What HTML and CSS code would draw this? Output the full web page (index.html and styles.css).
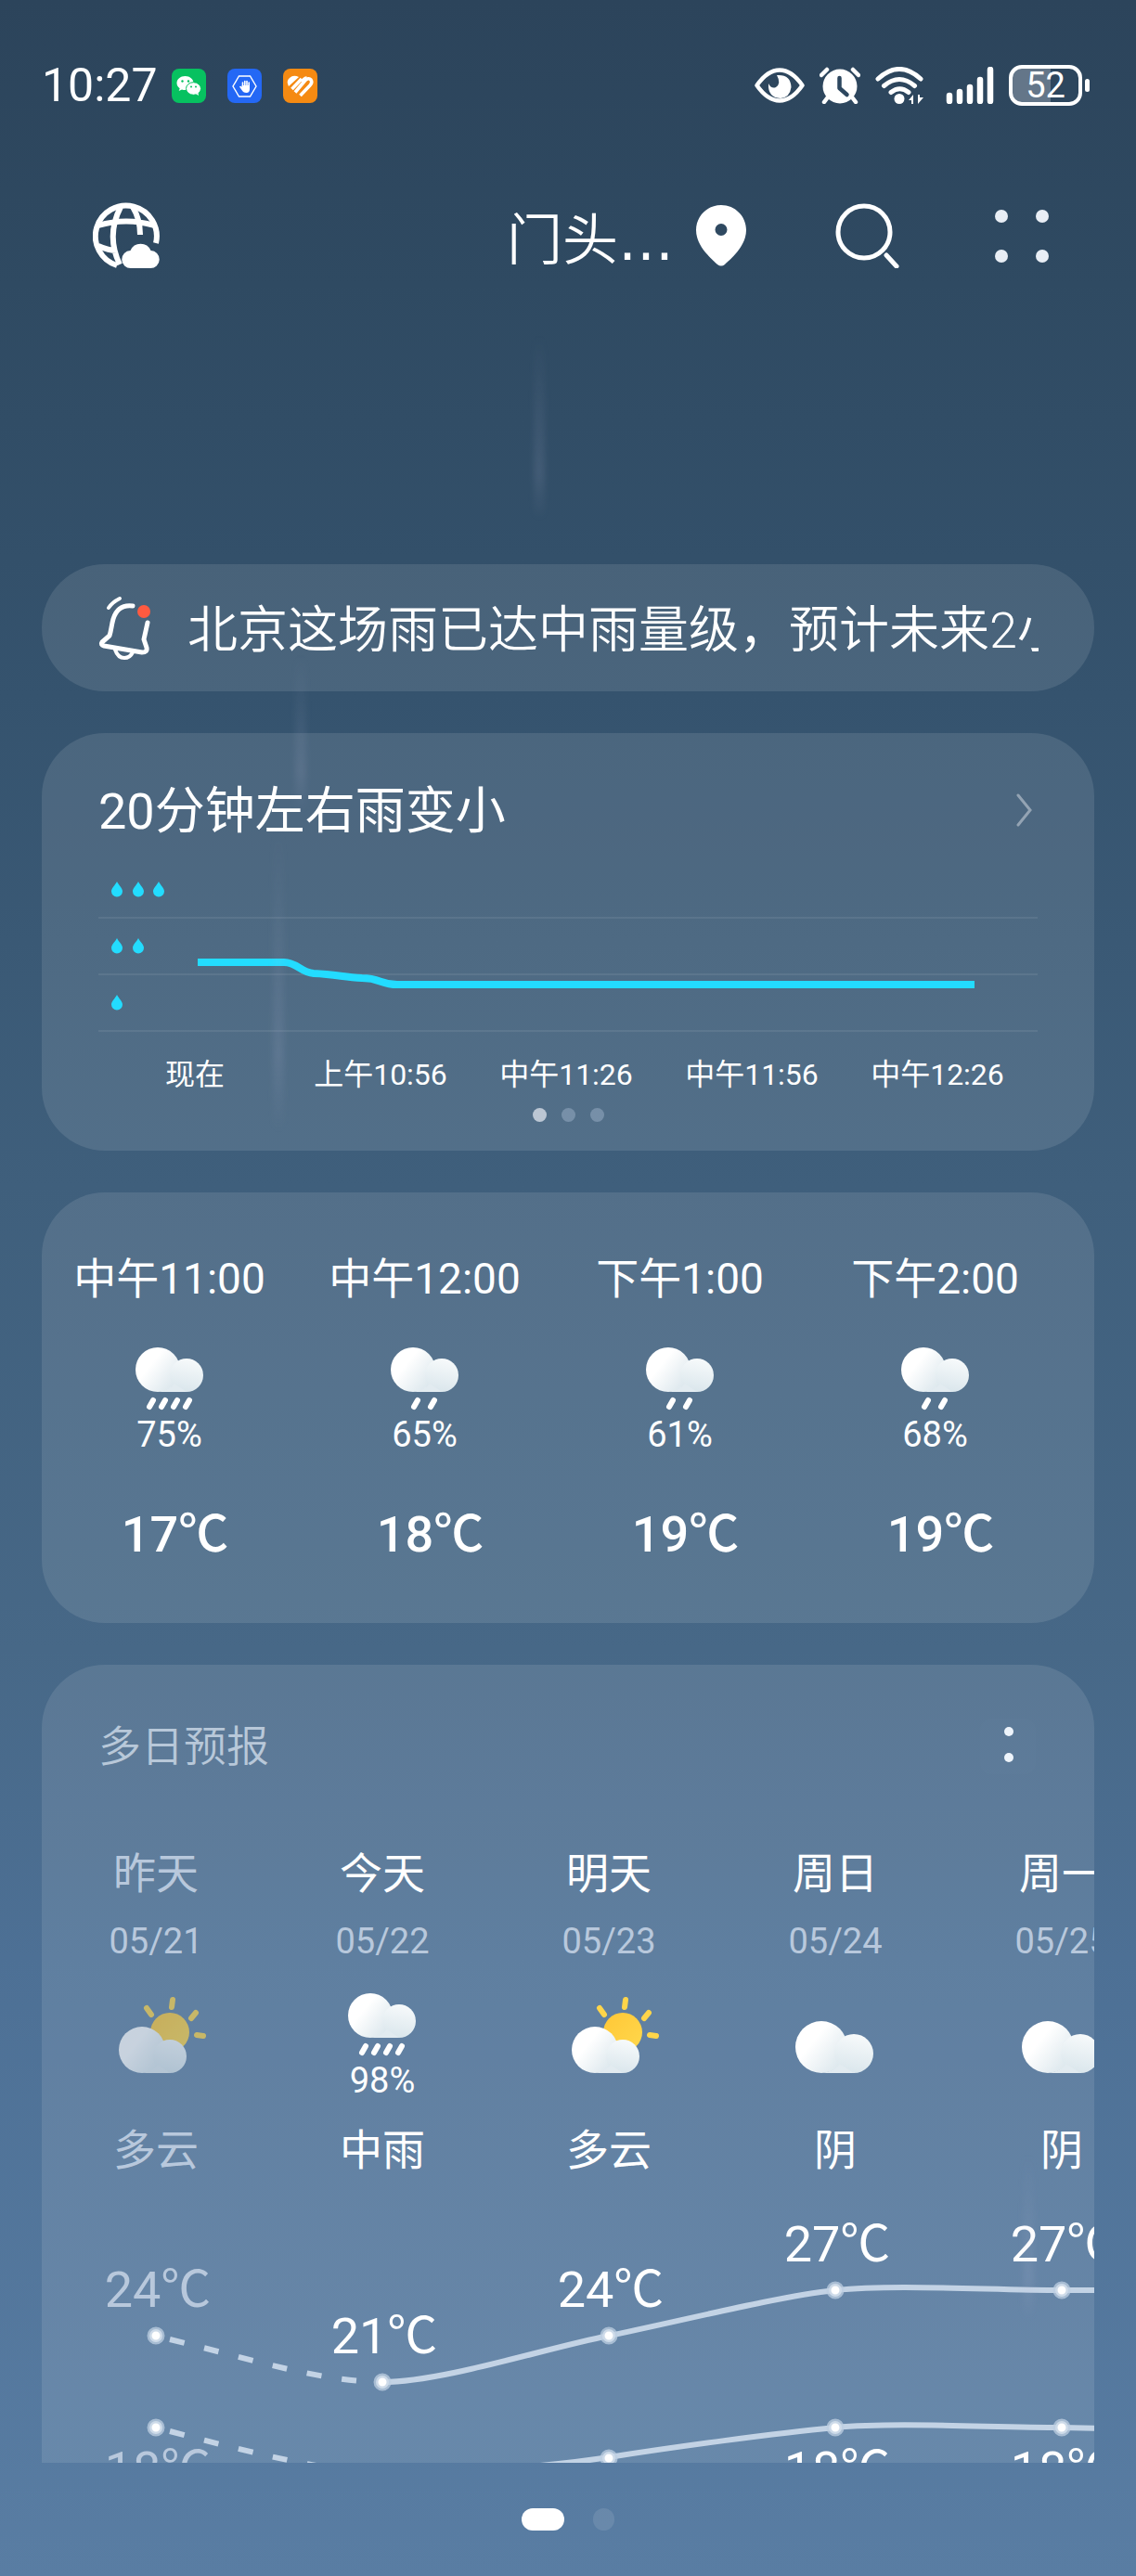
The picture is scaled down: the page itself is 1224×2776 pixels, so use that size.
FILE: index.html
```html
<!DOCTYPE html>
<html lang="zh-CN">
<head>
  <meta charset="UTF-8">
  <meta name="viewport" content="width=device-width, initial-scale=1">
  <title>天气</title>
  <link rel="stylesheet" href="styles.css">
</head>
<body>
  <!-- shared weather icons -->
  <svg class="defs" width="0" height="0" aria-hidden="true">
    <defs>
      <linearGradient id="cloudFill" x1="0" y1="0.2" x2="1" y2="1">
        <stop offset="0.3" stop-color="#ffffff"/>
        <stop offset="1" stop-color="#d3e1e8"/>
      </linearGradient>
      <linearGradient id="puffFill" x1="0.6" y1="0" x2="0.4" y2="1">
        <stop offset="0" stop-color="#f7fafb"/>
        <stop offset="1" stop-color="#dae6ec"/>
      </linearGradient>
      <linearGradient id="sunFill" x1="0" y1="0" x2="1" y2="1">
        <stop offset="0" stop-color="#ffc736"/>
        <stop offset="1" stop-color="#ffd84d"/>
      </linearGradient>
    </defs>
    <symbol id="rainCloud" viewBox="0 0 100 72">
      <circle cx="37" cy="26" r="24" fill="url(#cloudFill)"/>
      <circle cx="68" cy="32" r="18" fill="url(#puffFill)"/>
      <path d="M37 50q12-2 18-9l13 9z" fill="#e2ebf0"/>
    </symbol>
    <symbol id="heavyRain" viewBox="0 0 100 72">
      <use href="#rainCloud" width="100" height="72"/>
      <path d="M32 59l-4 7M45 59l-4 7M58 59l-4 7M71 59l-4 7" stroke="#fff" stroke-width="6" stroke-linecap="round"/>
    </symbol>
    <symbol id="lightRain" viewBox="0 0 100 72">
      <use href="#rainCloud" width="100" height="72"/>
      <path d="M42 59l-4 7M60 59l-4 7" stroke="#fff" stroke-width="6" stroke-linecap="round"/>
    </symbol>
    <symbol id="partlyCloudy" viewBox="0 0 110 96">
      <circle cx="70" cy="44" r="21" fill="url(#sunFill)"/>
      <path d="M73 9l-1 8M45 18l5 7M98 23l-5 6M99 47l7 1" stroke="#ffd54a" stroke-width="6" stroke-linecap="round"/>
      <circle cx="40" cy="63" r="25" fill="url(#cloudFill)"/>
      <circle cx="70" cy="70" r="18" fill="url(#puffFill)"/>
      <path d="M40 88q12-2 17-9l13 9z" fill="#e2ebf0"/>
    </symbol>
    <symbol id="cloudy" viewBox="0 0 110 96">
      <circle cx="40" cy="60" r="28" fill="url(#cloudFill)"/>
      <circle cx="75" cy="67" r="21" fill="url(#puffFill)"/>
      <path d="M40 88q14-2 20-10l15 10z" fill="#e2ebf0"/>
    </symbol>
  </svg>

  <div class="streak streak-a"></div>
  <div class="streak streak-b"></div>
  <div class="streak streak-c"></div>
  <div class="streak streak-d"></div>

  <div class="status-bar">
    <span class="clock">10:27</span>
    <div class="app-icons">
      <svg width="37" height="37" viewBox="0 0 37 37">
        <rect width="37" height="37" rx="8" fill="#07c160"/>
        <path d="M14.500 8c-5 0-9 3.300-9 7.500 0 2.300 1.200 4.300 3.200 5.700l-1 2.800 3.300-1.600c1.100.4 2.300.6 3.500.6 5 0 9-3.300 9-7.500S19.500 8 14.500 8z" fill="#fff"/>
        <ellipse cx="23.500" cy="21.500" rx="8" ry="6.800" fill="#fff" stroke="#07c160" stroke-width="1"/>
        <path d="M26 27l3 2-.5-3z" fill="#fff"/>
        <g fill="#07c160"><circle cx="11.500" cy="13.500" r="1.200"/><circle cx="18" cy="13.500" r="1.200"/><circle cx="21" cy="19.500" r="1"/><circle cx="26" cy="19.500" r="1"/></g>
      </svg>
      <svg width="37" height="37" viewBox="0 0 37 37">
        <rect width="37" height="37" rx="8" fill="#2468f5"/>
        <path d="M12.500 8h12l6.500 11-6.500 11h-12L6 19z" fill="none" stroke="#fff" stroke-width="1.400"/>
        <path d="M16.500 15v5M18.800 13.500v6M21 13.500v6M23.200 15v5" stroke="#fff" stroke-width="1.600" stroke-linecap="round"/>
        <path d="M15.700 18H24v4q0 4-3.500 4t-5-3l-2.500-3.500q1-1.500 2.700.5z" fill="#fff"/>
      </svg>
      <svg width="37" height="37" viewBox="0 0 37 37">
        <rect width="37" height="37" rx="8" fill="#f58a12"/>
        <path d="M6 19q-3-6 1-9 4-4 10-1z" fill="#fff"/>
        <path d="M9.500 22L20 11M13 25.500L23.500 13q4-4 6.500-1 2 3-1 6L18.500 29M20 14q3-4 5.500-4" fill="none" stroke="#fff" stroke-width="3.600"/>
      </svg>
    </div>
    <div class="system-icons">
      <svg width="54" height="38" viewBox="0 0 54 38">
        <path d="M2.500 19Q14 2.500 27 2.500T51.500 19Q40 35.500 27 35.500T2.500 19z" fill="none" stroke="#fff" stroke-width="4.500" stroke-linejoin="round"/>
        <path d="M24 8q15-1 15.500 13Q38 32 28 33 14 32 15 17q3 6 8 4 6-4 1-13z" fill="#fff"/>
      </svg>
      <svg width="44" height="40" viewBox="0 0 44 40" fill="none" stroke="#fff" stroke-linecap="round">
        <circle cx="22" cy="21" r="18.500" fill="#fff" stroke="none"/>
        <path d="M2 9l6-6M42 9l-6-6M8 34l-3 4M36 34l3 4" stroke-width="4.500"/>
        <path d="M21.500 12v11l8 7" stroke="#2d475f" stroke-width="4.500" stroke-linejoin="round"/>
      </svg>
      <svg width="52" height="40" viewBox="0 0 52 40">
        <path d="M3 13q23-21 46 0M9.500 20.500q16.500-14 33 0M17 27.500q9.500-7.500 19 0" fill="none" stroke="#fff" stroke-width="5" stroke-linecap="round"/>
        <circle cx="26" cy="34.500" r="5.500" fill="#fff"/>
        <path d="M36 36l5-6v10h-2v-4zM50 33h2l-6 7V30h2v3z" fill="#fff"/>
      </svg>
      <svg width="60" height="40" viewBox="0 0 60 40">
        <path d="M12 31v6M23 27v10M34 22v15M45 14v23M56 3v34" stroke="#fff" stroke-width="6.500" stroke-linecap="round"/>
      </svg>
      <div class="battery"><span>52</span></div>
    </div>
  </div>

  <header class="top-bar">
    <button class="icon-btn" type="button" aria-label="全球天气">
      <svg width="72" height="72" viewBox="0 0 72 72" fill="none" stroke="#fff" stroke-width="6">
        <path d="M26 68A33 33 0 1 1 68 44"/>
        <path d="M29 67Q14 36 30 5M43 5q8 13 8 30M6 25q30-9 60 0M6 47q11 5 20 5"/>
        <path d="M41 71a9.500 9.500 0 0 1-.5-19 12 12 0 0 1 22 0 9.500 9.500 0 0 1-.5 19z" fill="#fff" stroke="none"/>
      </svg>
    </button>
    <button class="location" type="button">
      <span class="city">门头<span class="more">…</span></span>
      <svg width="54" height="66" viewBox="0 0 54 66">
        <path d="M27 0C12 0 0 12 0 27c0 18 18 32 23 37q4 3 8 0c5-5 23-19 23-37C54 12 42 0 27 0zm0 20a6.500 6.500 0 1 1 0 13 6.500 6.500 0 0 1 0-13z" fill="#fff"/>
      </svg>
    </button>
    <button class="icon-btn" type="button" aria-label="搜索">
      <svg width="70" height="70" viewBox="0 0 70 70" fill="none" stroke="#fff">
        <circle cx="31" cy="31" r="28" stroke-width="5"/>
        <path d="M55 56l11 12" stroke-width="5" stroke-linecap="round"/>
      </svg>
    </button>
    <button class="icon-btn" type="button" aria-label="更多">
      <svg width="64" height="58" viewBox="0 0 64 58" fill="#e9eef5">
        <circle cx="13" cy="8" r="7"/><circle cx="57" cy="8" r="7"/>
        <circle cx="13" cy="51" r="7"/><circle cx="57" cy="51" r="7"/>
      </svg>
    </button>
  </header>

  <main>
    <section class="card alert">
      <svg width="60" height="70" viewBox="0 0 60 70" fill="none" stroke="#fff" stroke-width="5" stroke-linecap="round" stroke-linejoin="round">
        <path d="M38 11Q22 9 17 25c-2 7-2 12-4 18l-8 7q-2 3 2 4l41 7q6 0 5-5l-3-9 4-18"/>
        <path d="M19 58q3 9 10 9 6 0 9-6M12 13q4-6 12-10" stroke-width="4"/>
        <circle cx="50" cy="17" r="7" fill="#ff5a40" stroke="none"/>
      </svg>
      <p>北京这场雨已达中雨量级，预计未来2小时</p>
    </section>

    <section class="card rain">
      <div class="rain-title">
        <h2>20分钟左右雨变小</h2>
        <svg width="20" height="36" viewBox="0 0 20 36">
          <path d="M3 2l13 16L3 34" fill="none" stroke="#fff" stroke-opacity="0.400" stroke-width="3" stroke-linecap="round"/>
        </svg>
      </div>
      <svg class="rain-chart" viewBox="0 0 1012 184">
        <defs><path id="drop" d="M0-8C2-4 6-1 6 2.500a6 6 0 0 1-12 0C-6-1-2-4 0-8z"/></defs>
        <path d="M0 61h1012M0 122h1012M0 183h1012" stroke="#fff" stroke-opacity="0.080" stroke-width="2"/>
        <g fill="#23dcff">
          <use href="#drop" x="20" y="30"/><use href="#drop" x="43" y="30"/><use href="#drop" x="65" y="30"/>
          <use href="#drop" x="20" y="91"/><use href="#drop" x="43" y="91"/>
          <use href="#drop" x="20" y="152"/>
        </g>
        <path d="M107 109h93c14 0 18 11 32 12 24 1 32 4 52 5 20 0 20 7 38 7h622" fill="none" stroke="#23dcff" stroke-width="8"/>
      </svg>
      <div class="rain-times">
        <span>现在</span>
        <span>上午10:56</span>
        <span>中午11:26</span>
        <span>中午11:56</span>
        <span>中午12:26</span>
      </div>
      <div class="dots"><i class="on"></i><i></i><i></i></div>
    </section>

    <section class="card hourly">
      <div class="hour">
        <span class="time">中午11:00</span>
        <svg width="100" height="72"><use href="#heavyRain"/></svg>
        <span class="chance">75%</span>
        <span class="temp">17℃</span>
      </div>
      <div class="hour">
        <span class="time">中午12:00</span>
        <svg width="100" height="72"><use href="#lightRain"/></svg>
        <span class="chance">65%</span>
        <span class="temp">18℃</span>
      </div>
      <div class="hour">
        <span class="time">下午1:00</span>
        <svg width="100" height="72"><use href="#lightRain"/></svg>
        <span class="chance">61%</span>
        <span class="temp">19℃</span>
      </div>
      <div class="hour">
        <span class="time">下午2:00</span>
        <svg width="100" height="72"><use href="#lightRain"/></svg>
        <span class="chance">68%</span>
        <span class="temp">19℃</span>
      </div>
    </section>

    <section class="card daily">
      <div class="daily-title">
        <h2>多日预报</h2>
        <button class="icon-btn" type="button" aria-label="更多选项">
          <svg width="60" height="60" viewBox="0 0 60 60">
            <rect width="60" height="60" rx="12" fill="#fff" fill-opacity="0.010"/>
            <circle cx="31" cy="14" r="5" fill="#eef4fb"/><circle cx="31" cy="42" r="5" fill="#eef4fb"/>
          </svg>
        </button>
      </div>
      <div class="days">
        <div class="day past">
          <span class="name">昨天</span>
          <span class="date">05/21</span>
          <div class="icon"><svg width="110" height="96"><use href="#partlyCloudy"/></svg></div>
          <span class="name">多云</span>
        </div>
        <div class="day">
          <span class="name">今天</span>
          <span class="date">05/22</span>
          <div class="icon">
            <svg width="100" height="72"><use href="#heavyRain"/></svg>
            <span class="chance">98%</span>
          </div>
          <span class="name">中雨</span>
        </div>
        <div class="day">
          <span class="name">明天</span>
          <span class="date">05/23</span>
          <div class="icon"><svg width="110" height="96"><use href="#partlyCloudy"/></svg></div>
          <span class="name">多云</span>
        </div>
        <div class="day">
          <span class="name">周日</span>
          <span class="date">05/24</span>
          <div class="icon"><svg width="110" height="96"><use href="#cloudy"/></svg></div>
          <span class="name">阴</span>
        </div>
        <div class="day">
          <span class="name">周一</span>
          <span class="date">05/25</span>
          <div class="icon"><svg width="110" height="96"><use href="#cloudy"/></svg></div>
          <span class="name">阴</span>
        </div>
      </div>
      <svg class="trend" width="1220" height="420" viewBox="0 0 1220 420">
        <g fill="none" stroke="#c3d3e5" stroke-width="6">
          <path d="M137 174C220 194 300 220 366 220M137 273C220 295 300 315 366 319" stroke-dasharray="16 22"/>
          <path d="M366 220C430 220 540 184 610 170S790 128 854 121 1020 121 1098 121h122"/>
          <path d="M366 319C430 319 540 312 610 301S790 275 854 269 1020 269 1098 269t122 3"/>
        </g>
        <g class="points">
          <circle cx="122" cy="170" r="7"/><circle cx="366" cy="220" r="7"/><circle cx="610" cy="170" r="7"/><circle cx="854" cy="121" r="7"/><circle cx="1098" cy="121" r="7"/>
          <circle cx="122" cy="269" r="7"/><circle cx="366" cy="319" r="7"/><circle cx="610" cy="302" r="7"/><circle cx="854" cy="269" r="7"/><circle cx="1098" cy="269" r="7"/>
        </g>
        <g class="labels">
          <text class="past" x="124" y="139">24℃</text>
          <text x="368" y="189">21℃</text>
          <text x="612" y="139">24℃</text>
          <text x="856" y="90">27℃</text>
          <text x="1100" y="90">27℃</text>
          <text class="past" x="124" y="333">18℃</text>
          <text x="368" y="383">15℃</text>
          <text x="612" y="366">16℃</text>
          <text x="856" y="333">18℃</text>
          <text x="1100" y="333">18℃</text>
        </g>
      </svg>
    </section>
  </main>

  <footer class="pager"><i class="on"></i><i></i></footer>
</body>
</html>
```
FILE: styles.css
```css
* {
  box-sizing: border-box;
}
body {
  display: flex;
  flex-direction: column;
  height: 100vh;
  margin: 0;
  overflow: hidden;
  position: relative;
  font-family: Roboto, "Noto Sans CJK SC", sans-serif;
  color: #fff;
  background: linear-gradient(#2c445b 0%, #2f4a62 11%, #35536e 27%, #3f5f7c 46%, #476887 64%, #4d7095 76%, #597da3 100%);
}
svg {
  display: block;
  flex: none;
}
h2, p {
  margin: 0;
}
button {
  padding: 0;
  border: none;
  background: none;
  color: inherit;
  font: inherit;
  cursor: pointer;
}
.defs {
  position: absolute;
}

/* falling rain in the background */
.streak {
  position: absolute;
  width: 12px;
  border-radius: 6px;
  background: linear-gradient(rgba(190, 190, 220, 0), rgba(190, 190, 220, 0.12) 75%, rgba(190, 190, 220, 0));
  filter: blur(3px);
}
.streak-a { left: 47%; top: 360px; height: 200px; }
.streak-b { left: 26%; top: 705px; height: 170px; }
.streak-c { left: 24%; top: 890px; height: 330px; }
.streak-d { left: 90%; top: 2320px; height: 180px; }

.status-bar {
  display: flex;
  align-items: center;
  flex: none;
  height: 184px;
  padding: 0 50px 0 45px;
}
.clock {
  width: 140px;
  font-size: 50px;
}
.app-icons {
  display: flex;
  gap: 23px;
}
.system-icons {
  display: flex;
  align-items: center;
  gap: 16px;
  margin-left: auto;
}
.battery {
  position: relative;
  width: 79px;
  height: 44px;
  margin-right: 8px;
  border: 4px solid #fff;
  border-radius: 14px;
  background: linear-gradient(90deg, #647689 58%, transparent 58%);
  font-size: 38px;
  line-height: 37px;
  text-align: center;
}
.battery::after {
  content: "";
  position: absolute;
  right: -12px;
  top: 11px;
  width: 5px;
  height: 14px;
  border-radius: 3px;
  background: #fff;
}

.top-bar {
  display: flex;
  align-items: center;
  flex: none;
  gap: 96px;
  height: 140px;
  padding: 0 94px 0 100px;
}
.location {
  display: flex;
  align-items: center;
  gap: 24px;
  margin-left: auto;
}
.city {
  padding-top: 10px;
  font-size: 60px;
  font-weight: 350;
  line-height: 80px;
}
.more {
  font-family: "DejaVu Sans", sans-serif;
  font-weight: 400;
}

main {
  display: flex;
  flex-direction: column;
  flex: 1;
  gap: 45px;
  min-height: 0;
  margin: 284px 45px 0;
  overflow: hidden;
}
.card {
  flex: none;
  border-radius: 68px;
  background: rgba(255, 255, 255, 0.105);
  overflow: hidden;
}

.alert {
  display: flex;
  align-items: center;
  gap: 37px;
  height: 137px;
  padding: 0 60px;
}
.alert p {
  overflow: hidden;
  padding-top: 6px;
  white-space: nowrap;
  font-size: 54px;
  font-weight: 350;
  line-height: 80px;
}

.rain {
  padding: 50px 61px 31px;
}
.rain-title {
  display: flex;
  align-items: center;
  justify-content: space-between;
  padding-right: 4px;
}
.rain-title h2 {
  padding-top: 4px;
  font-size: 54px;
  font-weight: 400;
  line-height: 62px;
}
.rain-chart {
  width: 100%;
  margin-top: 22px;
}
.rain-times {
  display: grid;
  grid-template-columns: repeat(5, 1fr);
  margin-top: 24px;
  padding: 0 8px 0 4px;
  font-size: 32px;
  line-height: 44px;
  text-align: center;
}
.dots {
  display: flex;
  justify-content: center;
  gap: 16px;
  margin-top: 14px;
}
.dots i {
  width: 15px;
  height: 15px;
  border-radius: 50%;
  background: rgba(190, 205, 230, 0.35);
}
.dots .on {
  background: #bcc7d4;
}

.hourly {
  display: flex;
  padding: 63px 0;
}
.hour {
  display: flex;
  flex-direction: column;
  align-items: center;
  flex: none;
  width: 275px;
}
.time {
  font-size: 46px;
  line-height: 60px;
  margin-bottom: 42px;
}
.chance {
  margin-top: 4px;
  font-size: 38px;
  line-height: 40px;
}
.temp {
  margin-top: 56px;
  padding-left: 12px;
  font-size: 54px;
  font-weight: 500;
  line-height: 64px;
}

.daily {
  padding-top: 58px;
}
.daily-title {
  display: flex;
  align-items: center;
  justify-content: space-between;
  padding: 0 63px 0 61px;
}
.daily-title h2 {
  font-size: 46px;
  font-weight: 350;
  line-height: 60px;
  color: #b8c8d9;
}
.days {
  display: flex;
  margin: 77px 0 0 1px;
}
.day {
  display: flex;
  flex-direction: column;
  align-items: center;
  flex: none;
  width: 244px;
}
.name {
  font-size: 46px;
  line-height: 60px;
}
.date {
  margin-top: 21px;
  font-size: 38px;
  line-height: 44px;
  color: #b8c8dc;
}
.icon {
  display: flex;
  flex-direction: column;
  align-items: center;
  height: 116px;
  margin: 32px 0 25px;
}
.past .name {
  color: #b8c8dc;
}
.past .icon {
  opacity: 0.65;
}
.trend {
  margin-left: 1px;
}
.points circle {
  fill: #fff;
  stroke: rgba(190, 207, 226, 0.75);
  stroke-width: 5px;
}
.labels {
  fill: #fff;
  font-size: 54px;
  font-weight: 400;
  text-anchor: middle;
}
.labels .past {
  fill: #b8c8dc;
}

.pager {
  display: flex;
  align-items: center;
  justify-content: center;
  flex: none;
  gap: 31px;
  height: 122px;
}
.pager i {
  width: 23px;
  height: 24px;
  border-radius: 12px;
  background: rgba(255, 255, 255, 0.1);
}
.pager .on {
  width: 46px;
  background: #fff;
}
```
